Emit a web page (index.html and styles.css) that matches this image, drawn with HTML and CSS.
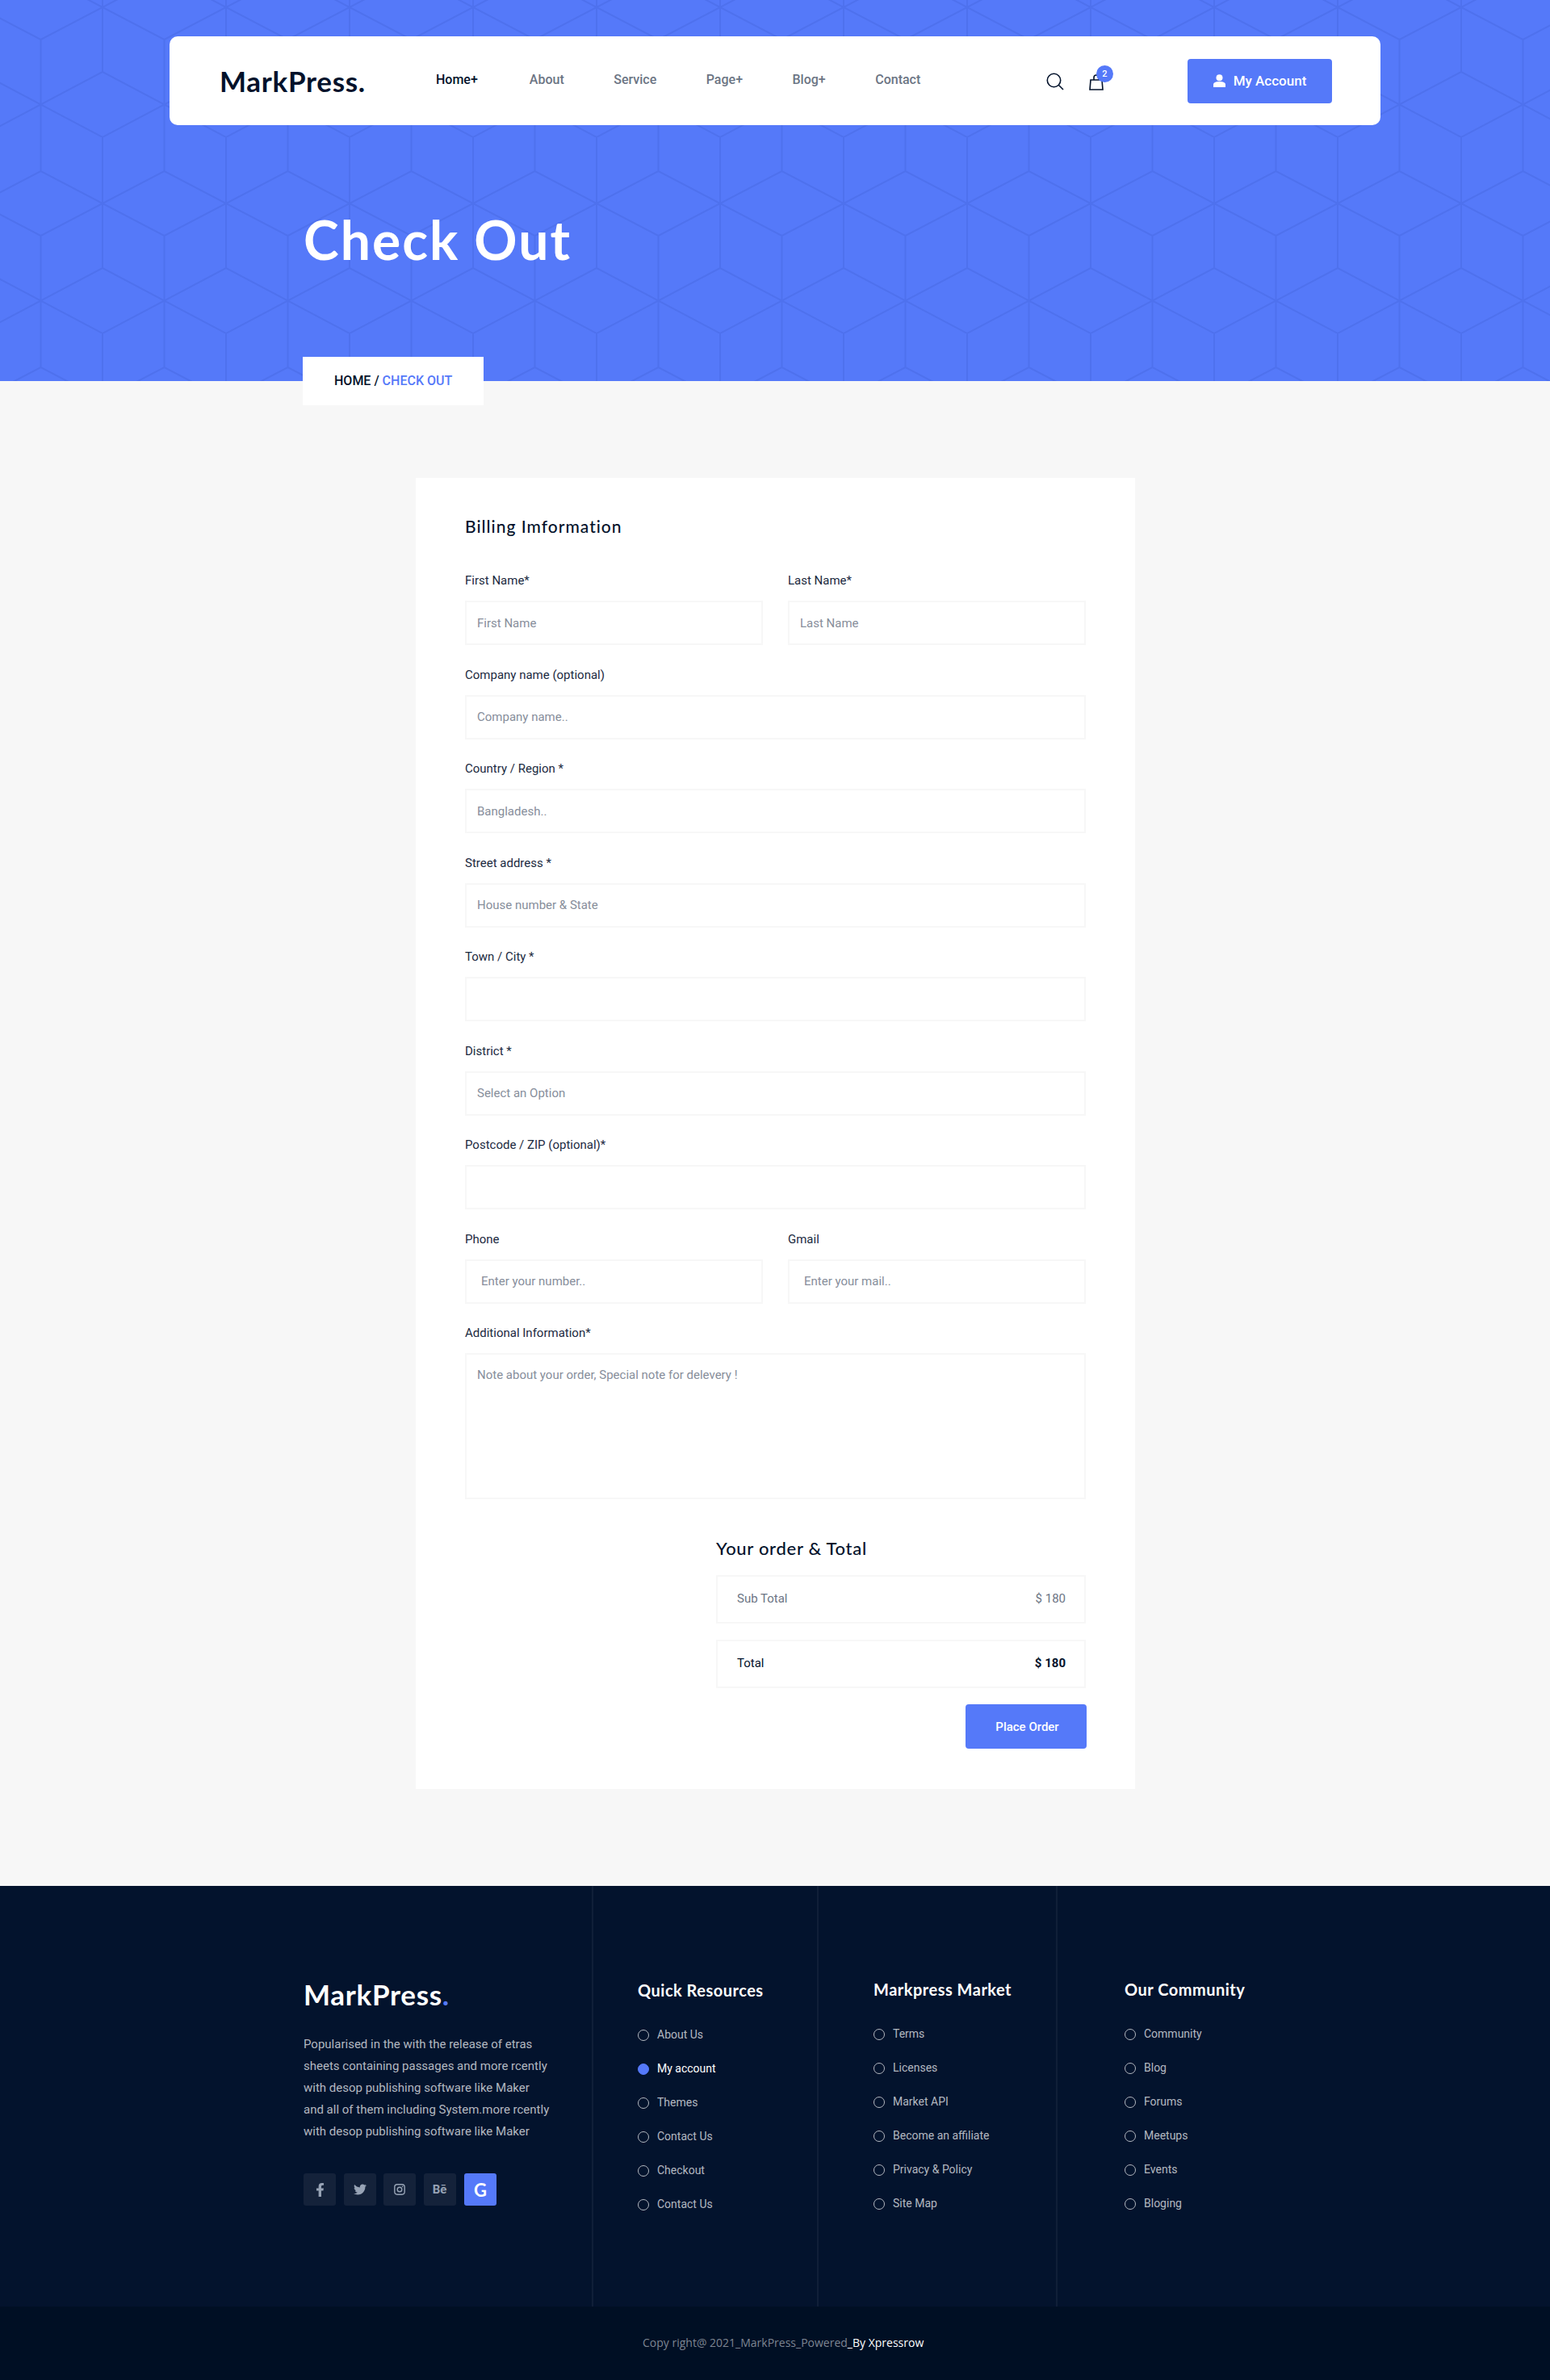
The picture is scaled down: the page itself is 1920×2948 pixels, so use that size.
FILE: index.html
```html
<!DOCTYPE html>
<html lang="en">
<head>
    <meta charset="UTF-8">
    <meta name="viewport" content="width=device-width, initial-scale=1.0">
    <title>MarkPress - Check Out</title>
    <link rel="stylesheet" href="styles.css">
</head>
<body>
    <section class="hero">
        <svg class="hero-pattern" aria-hidden="true">
            <defs>
                <pattern id="hex" x="127" y="170" width="153" height="243" patternUnits="userSpaceOnUse">
                    <path d="M0 0V162M153 0V162M76.5 0V42M76.5 122V243M0 82L76.5 42L153 82M0 82L76.5 122L153 82M0 162L153 243M153 162L0 243" fill="none" stroke="#4e71ee" stroke-width="2"/>
                </pattern>
            </defs>
            <rect width="100%" height="100%" fill="url(#hex)"/>
        </svg>

        <header class="nav">
            <a class="logo" href="#">MarkPress.</a>
            <ul class="menu">
                <li class="active"><a href="#">Home+</a></li>
                <li><a href="#">About</a></li>
                <li><a href="#">Service</a></li>
                <li><a href="#">Page+</a></li>
                <li><a href="#">Blog+</a></li>
                <li><a href="#">Contact</a></li>
            </ul>
            <div class="nav-icons">
                <svg class="icon-search" viewBox="0 0 22 22" width="22" height="22">
                    <circle cx="9.5" cy="9.5" r="8.2" fill="none" stroke="#03122b" stroke-width="1.6"/>
                    <path d="M15.5 15.5L21 21" fill="none" stroke="#03122b" stroke-width="1.6"/>
                </svg>
                <span class="cart">
                    <svg viewBox="0 0 18 21" width="18" height="21">
                        <path d="M2 8H16L17 20H1Z" fill="none" stroke="#03122b" stroke-width="1.6"/>
                        <path d="M6 8V5C6 1 12 1 12 5V8" fill="none" stroke="#03122b" stroke-width="1.6"/>
                    </svg>
                    <span class="badge">2</span>
                </span>
            </div>
            <a class="account-btn" href="#">
                <svg viewBox="0 0 15 16" width="15" height="16">
                    <circle cx="7.5" cy="4.2" r="4" fill="#fff"/>
                    <path d="M0 16V13C0 10 3 9 7.5 9S15 10 15 13V16Z" fill="#fff"/>
                </svg>
                My Account
            </a>
        </header>

        <h1 class="page-title">Check Out</h1>
        <div class="breadcrumb">HOME / <span>CHECK OUT</span></div>
    </section>

    <main class="checkout">
        <form class="card">
            <h3 class="card-title">Billing Imformation</h3>

            <div class="row">
                <div class="field">
                    <label>First Name*</label>
                    <input type="text" placeholder="First Name">
                </div>
                <div class="field">
                    <label>Last Name*</label>
                    <input type="text" placeholder="Last Name">
                </div>
            </div>
            <div class="field">
                <label>Company name (optional)</label>
                <input type="text" placeholder="Company name..">
            </div>
            <div class="field">
                <label>Country / Region *</label>
                <input type="text" placeholder="Bangladesh..">
            </div>
            <div class="field">
                <label>Street address *</label>
                <input type="text" placeholder="House number &amp; State">
            </div>
            <div class="field">
                <label>Town / City *</label>
                <input type="text">
            </div>
            <div class="field">
                <label>District *</label>
                <input type="text" placeholder="Select an Option">
            </div>
            <div class="field">
                <label>Postcode / ZIP (optional)*</label>
                <input type="text">
            </div>
            <div class="row">
                <div class="field wide-pad">
                    <label>Phone</label>
                    <input type="text" placeholder="Enter your number..">
                </div>
                <div class="field wide-pad">
                    <label>Gmail</label>
                    <input type="text" placeholder="Enter your mail..">
                </div>
            </div>
            <div class="field">
                <label>Additional Information*</label>
                <textarea placeholder="Note about your order, Special note for delevery !"></textarea>
            </div>

            <div class="order">
                <h4 class="order-title">Your order &amp; Total</h4>
                <div class="order-line">
                    <span>Sub Total</span>
                    <span class="amount">$ 180</span>
                </div>
                <div class="order-line total">
                    <span>Total</span>
                    <span class="amount">$ 180</span>
                </div>
                <button type="button" class="place-btn">Place Order</button>
            </div>
        </form>
    </main>

    <footer>
        <div class="footer-main">
            <div class="footer-col about">
                <div class="footer-logo">MarkPress<span>.</span></div>
                <p>Popularised in the with the release of etras sheets containing passages and more rcently with desop publishing software like Maker and all of them including System.more rcently with desop publishing software like Maker</p>
                <div class="socials">
                    <a href="#">
                        <svg viewBox="0 0 320 512" width="11" height="17"><path d="M279.14 288l14.22-92.66h-88.91v-60.13c0-25.35 12.42-50.06 52.24-50.06h40.42V6.26S260.43 0 225.36 0c-73.22 0-121.08 44.38-121.08 124.72v70.62H22.89V288h81.39v224h100.17V288z"/></svg>
                    </a>
                    <a href="#">
                        <svg viewBox="0 0 512 512" width="16" height="16"><path d="M459.37 151.716c.325 4.548.325 9.097.325 13.645 0 138.72-105.583 298.558-298.558 298.558-59.452 0-114.68-17.219-161.137-47.106 8.447.974 16.568 1.299 25.34 1.299 49.055 0 94.213-16.568 130.274-44.832-46.132-.975-84.792-31.188-98.112-72.772 6.498.974 12.995 1.624 19.818 1.624 9.421 0 18.843-1.3 27.614-3.573-48.081-9.747-84.143-51.98-84.143-102.985v-1.299c13.969 7.797 30.214 12.67 47.431 13.319-28.264-18.843-46.781-51.005-46.781-87.391 0-19.492 5.197-37.36 14.294-52.954 51.655 63.675 129.3 105.258 216.365 109.807-1.624-7.797-2.599-15.918-2.599-24.04 0-57.828 46.782-104.934 104.934-104.934 30.213 0 57.502 12.67 76.67 33.137 23.715-4.548 46.456-13.32 66.599-25.34-7.798 24.366-24.366 44.833-46.132 57.827 21.117-2.273 41.584-8.122 60.426-16.243-14.292 20.791-32.161 39.308-52.628 54.253z"/></svg>
                    </a>
                    <a href="#">
                        <svg viewBox="0 0 14 14" width="14" height="14">
                            <rect x=".8" y=".8" width="12.4" height="12.4" rx="3.4" fill="none" stroke="#97a3b5" stroke-width="1.4"/>
                            <circle cx="7" cy="7" r="2.8" fill="none" stroke="#97a3b5" stroke-width="1.4"/>
                            <circle cx="10.6" cy="3.4" r=".8"/>
                        </svg>
                    </a>
                    <a href="#" class="be">B&#275;</a>
                    <a href="#" class="google">G</a>
                </div>
            </div>

            <div class="footer-col links">
                <h5>Quick Resources</h5>
                <ul>
                    <li><a href="#">About Us</a></li>
                    <li class="current"><a href="#">My account</a></li>
                    <li><a href="#">Themes</a></li>
                    <li><a href="#">Contact Us</a></li>
                    <li><a href="#">Checkout</a></li>
                    <li><a href="#">Contact Us</a></li>
                </ul>
            </div>

            <div class="footer-col links market">
                <h5>Markpress Market</h5>
                <ul>
                    <li><a href="#">Terms</a></li>
                    <li><a href="#">Licenses</a></li>
                    <li><a href="#">Market API</a></li>
                    <li><a href="#">Become an affiliate</a></li>
                    <li><a href="#">Privacy &amp; Policy</a></li>
                    <li><a href="#">Site Map</a></li>
                </ul>
            </div>

            <div class="footer-col links community">
                <h5>Our Community</h5>
                <ul>
                    <li><a href="#">Community</a></li>
                    <li><a href="#">Blog</a></li>
                    <li><a href="#">Forums</a></li>
                    <li><a href="#">Meetups</a></li>
                    <li><a href="#">Events</a></li>
                    <li><a href="#">Bloging</a></li>
                </ul>
            </div>
        </div>
        <div class="footer-bottom">Copy right@ 2021_MarkPress_Powered<span>_By Xpressrow</span></div>
    </footer>
</body>
</html>
```
FILE: styles.css
```css
* { box-sizing: border-box; }
body {
    margin: 0;
    font-family: Roboto, sans-serif;
    font-size: 15px;
    color: #03122b;
    background-color: #f7f7f7;
}
a { color: inherit; text-decoration: none; }
ul { list-style: none; margin: 0; padding: 0; }

.hero {
    position: relative;
    height: 472px;
    padding-top: 45px;
    background-color: #5579f9;
}
.hero-pattern {
    position: absolute;
    top: 0;
    left: 0;
    width: 100%;
    height: 100%;
}
.nav {
    position: relative;
    display: flex;
    align-items: center;
    width: 1500px;
    height: 110px;
    margin-left: 210px;
    padding: 0 60px 0 62px;
    background-color: #fff;
    border-radius: 10px;
}
.logo {
    width: 268px;
    font-family: Lato, sans-serif;
    font-size: 35px;
    font-weight: 700;
    color: #03122b;
    letter-spacing: .7px;
}
.menu {
    display: flex;
    gap: 61.5px;
    margin-top: -3px;
    font-size: 16px;
    font-weight: 500;
    color: #6c7584;
}
.menu .active { color: #03122b; margin-right: 2.5px; }
.nav-icons {
    display: flex;
    gap: 31px;
    align-items: center;
    margin-left: auto;
    margin-right: 104px;
    margin-top: 2px;
}
.cart { position: relative; display: block; height: 21px; }
.icon-search, .cart svg { display: block; }
.badge {
    position: absolute;
    top: -10px;
    left: 9px;
    width: 21px;
    height: 21px;
    border-radius: 50%;
    background-color: #5579f9;
    color: #fff;
    font-size: 11px;
    font-weight: 500;
    line-height: 21px;
    text-align: center;
}
.account-btn {
    display: flex;
    align-items: center;
    justify-content: center;
    gap: 10px;
    width: 179px;
    height: 55px;
    background-color: #5579f9;
    border-radius: 4px;
    color: #fff;
    font-size: 17px;
    font-weight: 500;
}
.page-title {
    position: relative;
    margin: 102px 0 0 376px;
    font-family: Lato, sans-serif;
    font-size: 66px;
    font-weight: 700;
    line-height: 80px;
    color: #fff;
    letter-spacing: 2px;
}
.breadcrumb {
    position: relative;
    width: 224px;
    height: 60px;
    margin: 105px 0 0 375px;
    padding: 20px 0 0 39px;
    background-color: #fff;
    font-size: 16px;
    font-weight: 500;
}
.breadcrumb span { color: #5579f9; }

.checkout { padding: 120px 0; }
.card {
    width: 891px;
    margin-left: 515px;
    padding: 46px 61px 50px;
    background-color: #fff;
}
.card-title {
    margin: 0 0 42px;
    font-family: Lato, sans-serif;
    font-size: 21px;
    font-weight: 500;
    line-height: 28px;
    letter-spacing: 1px;
}
.row {
    display: flex;
    gap: 31px;
}
.row .field { width: 369px; }
.field { margin-bottom: 25.5px; }
.field label {
    display: block;
    margin-bottom: 14px;
    line-height: 22px;
    color: #1b2a41;
}
.field input, .field textarea {
    display: block;
    width: 100%;
    height: 55px;
    padding: 0 13px;
    border: 2px solid #f7f7f7;
    border-radius: 0;
    outline: none;
    background-color: #fff;
    font-family: Roboto, sans-serif;
    font-size: 15px;
}
.field textarea {
    height: 181px;
    padding-top: 16px;
    resize: none;
}
.wide-pad input { padding: 0 18px; }
.field input::placeholder, .field textarea::placeholder {
    color: #878e9b;
    opacity: 1;
}
.order {
    display: flex;
    flex-direction: column;
    align-items: flex-end;
    width: 458px;
    margin-left: auto;
    margin-top: 47px;
}
.order-title {
    align-self: flex-start;
    margin: 0 0 19px;
    font-family: Lato, sans-serif;
    font-size: 22px;
    font-weight: 500;
    line-height: 28px;
    letter-spacing: .7px;
}
.order-line {
    display: flex;
    justify-content: space-between;
    align-items: center;
    width: 100%;
    height: 60px;
    margin-bottom: 20px;
    padding: 0 23px 2px 24px;
    border: 2px solid #f7f7f7;
    color: #6c7584;
}
.order-line.total { color: #03122b; }
.order-line.total .amount { font-weight: 700; }
.place-btn {
    width: 150px;
    height: 55px;
    margin-right: -1px;
    padding: 0 0 0 3px;
    border: none;
    border-radius: 4px;
    background-color: #5579f9;
    color: #fff;
    font-family: Roboto, sans-serif;
    font-size: 15px;
    font-weight: 500;
}

footer { background-color: #03132d; }
.footer-main {
    display: grid;
    grid-template-columns: 359px 279px 296px 1fr;
    height: 521px;
    padding-left: 376px;
}
.footer-col {
    padding-top: 115px;
    border-right: 2px solid #101f38;
}
.footer-col:last-child { border-right: none; }
.footer-logo {
    margin-top: 114px;
    font-family: Lato, sans-serif;
    font-size: 35px;
    font-weight: 700;
    line-height: 40px;
    color: #fff;
    letter-spacing: .7px;
}
.footer-logo span { color: #5579f9; }
.about { padding-top: 0; }
.about p {
    width: 306px;
    margin: 29px 0 0;
    line-height: 27px;
    color: #b3b8c0;
}
.socials {
    display: flex;
    margin-top: 38px;
    gap: 9.5px;
}
.socials a {
    display: flex;
    align-items: center;
    justify-content: center;
    width: 40px;
    height: 40px;
    border-radius: 3px;
    background-color: #14223a;
    color: #97a3b5;
    fill: #97a3b5;
}
.socials .be {
    font-size: 15px;
    font-weight: 700;
}
.socials .google {
    margin-left: 1px;
    background-color: #5579f9;
    color: #fff;
    font-size: 22px;
    font-weight: 700;
    font-family: Lato, sans-serif;
}
.links { padding-left: 55px; }
.market { padding-left: 68px; }
.community { padding-left: 83px; }
.links h5 {
    margin: 0 0 29px;
    font-family: Lato, sans-serif;
    font-size: 20px;
    font-weight: 700;
    line-height: 28px;
    color: #fff;
    letter-spacing: .5px;
}
.market h5, .community h5 { margin-top: -1px; }
.links li {
    position: relative;
    height: 42px;
    padding-left: 24px;
    font-size: 14px;
    line-height: 24px;
    color: #b3b8c0;
}
.links li::before {
    content: "";
    position: absolute;
    top: 6px;
    left: 0;
    width: 12px;
    height: 12px;
    border: 1px solid #b3b8c0;
    border-radius: 50%;
}
.links .current { color: #fff; }
.links .current::before {
    background-color: #5579f9;
    border-color: #5579f9;
}
.footer-bottom {
    height: 91px;
    padding-top: 35px;
    padding-left: 796px;
    background-color: #000f24;
    font-family: "Open Sans", sans-serif;
    font-size: 14px;
    line-height: 20px;
    color: #7d8592;
}
.footer-bottom span { color: #fff; }
```
